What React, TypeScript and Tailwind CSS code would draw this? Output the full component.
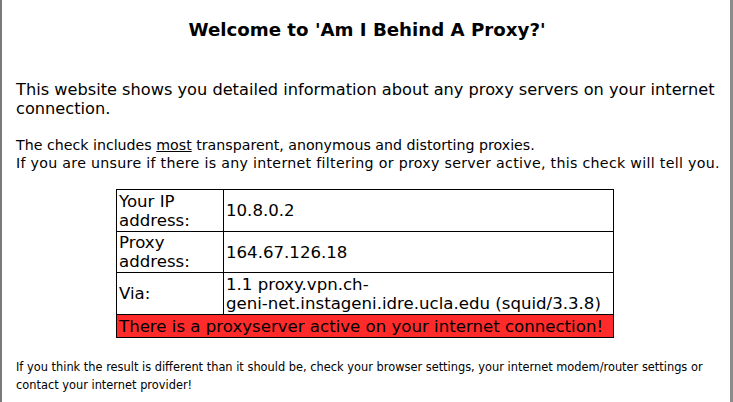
export default function App() {
  const sans = { fontFamily: '"DejaVu Sans", Verdana, sans-serif' };
  return (
    <div className="min-h-[402px] bg-white text-black border-l-2 border-r-[3px] border-l-[#7a7a7a] border-r-[#8c8c8c] pl-[14px] pr-[12px]" style={sans}>
      <h1 className="text-center font-bold text-[18.2px] leading-[20px] pt-[20px] whitespace-nowrap">
        Welcome to 'Am I Behind A Proxy?'
      </h1>
      <p className="mt-[40px] text-[16.2px] leading-[19px]">
        This website shows you detailed information about any proxy servers on your internet connection.
      </p>
      <p className="mt-[18px] text-[14.2px] leading-[18px] whitespace-nowrap">
        The check includes <span className="underline">most</span> transparent, anonymous and distorting proxies.
        <br />
        <span className="tracking-[0.3px]">
          If you are unsure if there is any internet filtering or proxy server active, this check will tell you.
        </span>
      </p>
      <div className="mt-[17px] flex justify-center pr-[4px]">
        <table className="w-[498px] border-collapse border border-black text-[16.6px] leading-[19px]">
          <tbody>
            <tr className="h-[42px]">
              <td className="w-[107px] border border-black px-[2px] align-middle">Your IP address:</td>
              <td className="border border-black px-[2px] align-middle">10.8.0.2</td>
            </tr>
            <tr className="h-[41px]">
              <td className="border border-black px-[2px] align-middle">Proxy address:</td>
              <td className="border border-black px-[2px] align-middle">164.67.126.18</td>
            </tr>
            <tr className="h-[42px]">
              <td className="border border-black px-[2px] align-middle">Via:</td>
              <td className="border border-black px-[2px] align-middle">
                1.1 proxy.vpn.ch-
                <br />
                <span className="whitespace-nowrap">geni-net.instageni.idre.ucla.edu (squid/3.3.8)</span>
              </td>
            </tr>
            <tr className="h-[23px]">
              <td colSpan={2} className="border border-black bg-[#ff2b2b] px-[2px] align-middle whitespace-nowrap">
                There is a proxyserver active on your internet connection!
              </td>
            </tr>
          </tbody>
        </table>
      </div>
      <p className="mt-[20px] text-[11.4px] leading-[18px]">
        If you think the result is different than it should be, check your browser settings, your internet modem/router settings or contact your internet provider!
      </p>
    </div>
  );
}
